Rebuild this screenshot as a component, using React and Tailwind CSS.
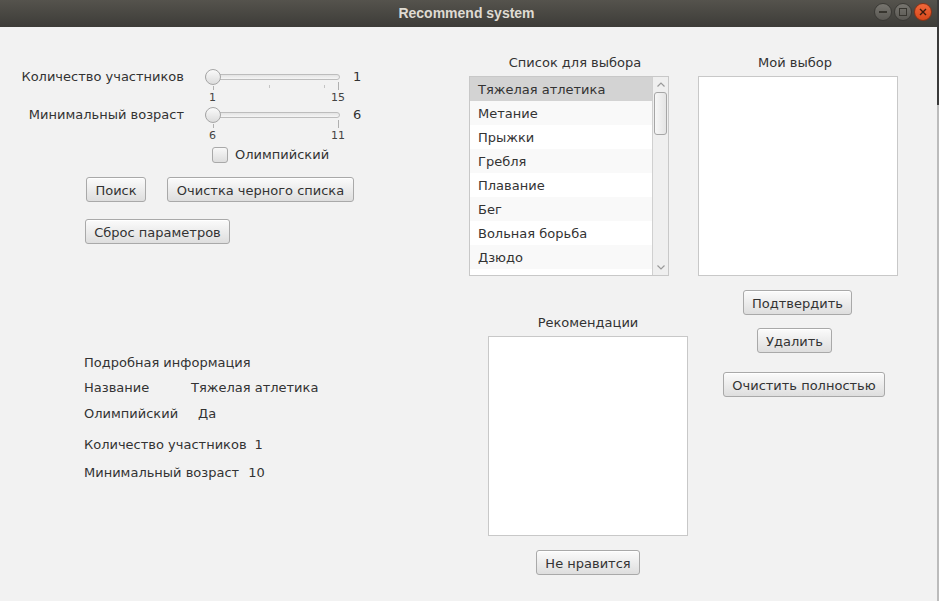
import React from 'react';

const sports = ['Тяжелая атлетика', 'Метание', 'Прыжки', 'Гребля', 'Плавание', 'Бег', 'Вольная борьба', 'Дзюдо'];

const Btn = ({ w, className = '', children }) => (
  <button
    className={`h-[25px] ${w} rounded-[3px] border border-[#a9a9a9] bg-gradient-to-b from-[#fbfbfb] to-[#dedede] text-[13px] text-[#333] leading-none pt-[1px] flex items-center justify-center shadow-[inset_0_1px_0_#fff] ${className}`}
  >
    {children}
  </button>
);

const Slider = ({ min, max, minors = [] }) => (
  <div className="w-[136px]">
    <div className="relative h-[16px]">
      <div className="absolute left-0 top-[5px] h-[6px] w-[135px] rounded-full border border-[#bdbdbd] bg-gradient-to-b from-[#e4e4e4] to-[#f6f6f6]" />
      <div className="absolute left-0 top-0 h-[16px] w-[16px] rounded-full border border-[#a6a6a6] bg-gradient-to-b from-[#fafafa] to-[#dcdcdc]" />
    </div>
    <div className="relative h-[22px]">
      <div className="absolute left-[8px] top-[1px] h-[4px] w-px bg-[#b0b0b0]" />
      <div className="absolute left-[133px] top-[-3px] h-[8px] w-px bg-[#b0b0b0]" />
      {minors.map((x) => (
        <div key={x} className="absolute top-[0px] h-[3px] w-px bg-[#c4c4c4]" style={{ left: x }} />
      ))}
      <span className="absolute left-[4px] top-[7px] text-[11px] leading-[12px] text-[#444]">{min}</span>
      <span className="absolute left-[126px] top-[7px] text-[11px] leading-[12px] text-[#444]">{max}</span>
    </div>
  </div>
);

export default function App() {
  return (
    <div className="w-[939px] h-[601px] flex bg-[#f2f2f2] text-[13px] text-[#333] overflow-hidden" style={{ fontFamily: '"DejaVu Sans", sans-serif' }}>
      <div className="w-[937px] h-full flex flex-col">
        {/* Title bar */}
        <div className="relative h-[27px] flex items-center justify-center bg-gradient-to-b from-[#55534d] to-[#3d3c38]">
          <span className="text-[14px] font-bold text-[#dfdbd2] mr-[4px]" style={{ fontFamily: '"Liberation Sans", sans-serif' }}>Recommend system</span>
          <div className="absolute right-[5px] top-[3px] flex gap-[2px]">
            <div className="h-[18px] w-[18px] rounded-full border border-[#3a3935] bg-gradient-to-b from-[#77756f] to-[#5a5853] flex items-center justify-center">
              <div className="h-[1.5px] w-[8px] bg-[#37352f]" />
            </div>
            <div className="h-[18px] w-[18px] rounded-full border border-[#3a3935] bg-gradient-to-b from-[#77756f] to-[#5a5853] flex items-center justify-center">
              <div className="h-[8px] w-[8px] border-[1.5px] border-[#37352f]" />
            </div>
            <div className="h-[18px] w-[18px] rounded-full border border-[#8a3216] bg-gradient-to-b from-[#f0683a] to-[#d8481a] flex items-center justify-center">
              <svg width="8" height="8" viewBox="0 0 8 8">
                <path d="M1 1L7 7M7 1L1 7" stroke="#3a1a0e" strokeWidth="1.4" />
              </svg>
            </div>
          </div>
        </div>

        <div className="flex flex-1">
          {/* Left column */}
          <div className="w-[460px] flex flex-col pt-[42px]">
            <div className="flex">
              <div className="w-[184px] h-[16px] leading-[16px] text-right">Количество участников</div>
              <div className="ml-[21px]">
                <Slider min="1" max="15" minors={[64, 119]} />
              </div>
              <div className="ml-[12px] h-[16px] leading-[16px]">1</div>
            </div>
            <div className="flex">
              <div className="w-[184px] h-[16px] leading-[16px] text-right">Минимальный возраст</div>
              <div className="ml-[21px]">
                <Slider min="6" max="11" />
              </div>
              <div className="ml-[12px] h-[16px] leading-[16px]">6</div>
            </div>
            <div className="flex items-center mt-[2px] ml-[212px]">
              <div className="h-[16px] w-[16px] rounded-[3px] border border-[#a9a9a9] bg-gradient-to-b from-[#f8f8f8] to-[#dedede]" />
              <span className="ml-[7px] leading-[16px]">Олимпийский</span>
            </div>
            <div className="flex mt-[14px]">
              <Btn w="w-[60px]" className="ml-[86px]">Поиск</Btn>
              <Btn w="w-[187px]" className="ml-[21px]">Очистка черного списка</Btn>
            </div>
            <Btn w="w-[145px]" className="ml-[85px] mt-[17px]">Сброс параметров</Btn>

            <div className="ml-[84px] mt-[111px] flex flex-col">
              <div className="h-[16px] leading-[16px]">Подробная информация</div>
              <div className="h-[16px] leading-[16px] mt-[9px] flex">
                <span className="w-[107px]">Название</span>
                <span>Тяжелая атлетика</span>
              </div>
              <div className="h-[16px] leading-[16px] mt-[10px] flex">
                <span className="w-[114px]">Олимпийский</span>
                <span>Да</span>
              </div>
              <div className="h-[16px] leading-[16px] mt-[15px] flex">
                <span>Количество участников</span>
                <span className="ml-[8px]">1</span>
              </div>
              <div className="h-[16px] leading-[16px] mt-[12px] flex">
                <span>Минимальный возраст</span>
                <span className="ml-[9px]">10</span>
              </div>
            </div>
          </div>

          {/* Middle column */}
          <div className="w-[229px] flex flex-col pt-[28px]">
            <div className="ml-[9px] w-[200px] pl-[12px] text-center h-[16px] leading-[16px]">Список для выбора</div>
            <div className="ml-[9px] mt-[5px] w-[200px] h-[200px] border border-[#c8c8c8] bg-white flex overflow-hidden">
              <div className="flex-1 flex flex-col">
                {sports.map((s, i) => (
                  <div
                    key={s}
                    className={`h-[24px] shrink-0 leading-[24px] pt-[1px] pl-[8px] ${i === 0 ? 'bg-[#d3d3d3]' : i % 2 === 1 ? 'bg-[#f9f9f9]' : 'bg-white'}`}
                  >
                    {s}
                  </div>
                ))}
              </div>
              <div className="w-[16px] h-full border-l border-[#d0d0d0] bg-[#efefef] flex flex-col items-center">
                <svg width="10" height="14" viewBox="0 0 10 14" className="mt-[1px]">
                  <path d="M1.5 8.5L5 5L8.5 8.5" fill="none" stroke="#9a9a9a" strokeWidth="1.2" />
                </svg>
                <div className="h-[43px] w-[13px] rounded-[3px] border border-[#a6a6a6] bg-gradient-to-r from-[#f7f7f7] to-[#e4e4e4]" />
                <div className="flex-1" />
                <svg width="10" height="14" viewBox="0 0 10 14" className="mb-[1px]">
                  <path d="M1.5 5.5L5 9L8.5 5.5" fill="none" stroke="#9a9a9a" strokeWidth="1.2" />
                </svg>
              </div>
            </div>

            <div className="ml-[28px] mt-[39px] w-[200px] text-center h-[16px] leading-[16px]">Рекомендации</div>
            <div className="ml-[28px] mt-[5px] w-[200px] h-[200px] border border-[#c8c8c8] bg-white" />
            <Btn w="w-[104px]" className="ml-[76px] mt-[14px]">Не нравится</Btn>
          </div>

          {/* Right column */}
          <div className="flex-1 flex flex-col pt-[28px]">
            <div className="ml-[9px] w-[200px] pr-[6px] text-center h-[16px] leading-[16px]">Мой выбор</div>
            <div className="ml-[9px] mt-[5px] w-[200px] h-[200px] border border-[#c8c8c8] bg-white" />
            <Btn w="w-[109px]" className="ml-[54px] mt-[14px]">Подтвердить</Btn>
            <Btn w="w-[75px]" className="ml-[68px] mt-[13px]">Удалить</Btn>
            <Btn w="w-[162px]" className="ml-[34px] mt-[19px]">Очистить полностью</Btn>
          </div>
        </div>
      </div>
      <div className="w-[2px] h-full flex flex-col">
        <div className="h-[105px] bg-[#3a3a3a]" />
        <div className="flex-1 bg-[#bcbcbc]" />
      </div>
    </div>
  );
}
